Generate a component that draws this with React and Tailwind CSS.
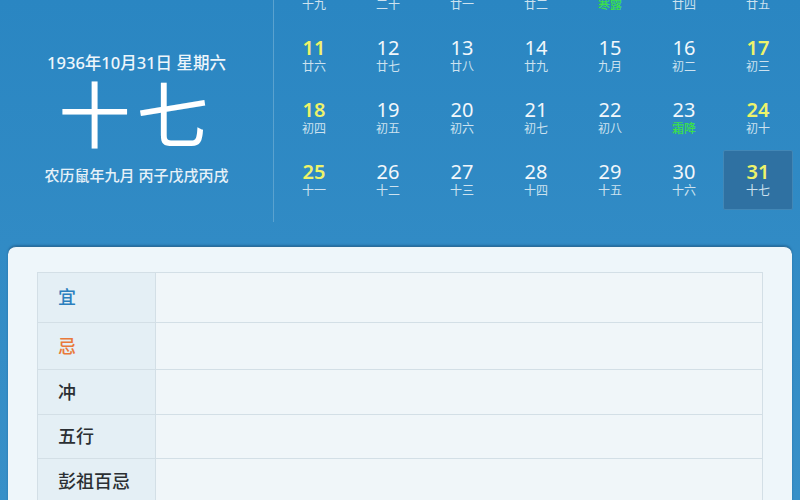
import React from "react";

const weeks = [
  [
    ["4", "十九"], ["5", "二十"], ["6", "廿一"], ["7", "廿二"],
    ["8", "寒露", "term"], ["9", "廿四"], ["10", "廿五"],
  ],
  [
    ["11", "廿六"], ["12", "廿七"], ["13", "廿八"], ["14", "廿九"],
    ["15", "九月"], ["16", "初二"], ["17", "初三"],
  ],
  [
    ["18", "初四"], ["19", "初五"], ["20", "初六"], ["21", "初七"],
    ["22", "初八"], ["23", "霜降", "term"], ["24", "初十"],
  ],
  [
    ["25", "十一"], ["26", "十二"], ["27", "十三"], ["28", "十四"],
    ["29", "十五"], ["30", "十六"], ["31", "十七", "today"],
  ],
];

const rows = [
  { label: "宜", color: "text-[#2b7fbe]", h: "h-[49px]" },
  { label: "忌", color: "text-[#e9793a]", h: "h-[47px]" },
  { label: "冲", color: "text-[#2b2f33]", h: "h-[45px]" },
  { label: "五行", color: "text-[#2b2f33]", h: "h-[44px]" },
  { label: "彭祖百忌", color: "text-[#2b2f33]", h: "h-[46px]" },
];

const DayCell = ({ day, lunar, kind, weekend }) => (
  <div className="relative h-[62px] flex flex-col items-center pt-[13px]">
    {kind === "today" && (
      <div className="absolute left-[2px] right-[2px] top-[1px] bottom-[1px] bg-[#2f71a2] border border-[#4287b6] rounded-[2px]" />
    )}
    <div
      className={`relative text-[20px] leading-[20px] ${
        weekend ? "text-[#eef36a] font-semibold" : "text-[#f2f7fb]"
      }`}
    >
      {day}
    </div>
    <div
      className={`relative mt-[2px] text-[12px] leading-[14px] ${
        kind === "term" ? "text-[#3be04a] font-medium" : "text-[#cde2ef]"
      }`}
    >
      {lunar}
    </div>
  </div>
);

export default function App() {
  return (
    <div
      className="w-[800px] h-[500px] overflow-hidden bg-gradient-to-b from-[#2a86c2] to-[#3890c8] flex flex-col"
      style={{ fontFamily: '"Noto Sans", "Noto Sans CJK SC", sans-serif' }}
    >
      <div className="flex h-[222px] shrink-0">
        <div className="w-[273px] flex flex-col items-center text-white">
          <div className="mt-[52px] text-[16.5px] leading-[22px] font-medium text-[#eef6fb]">
            1936年10月31日 星期六
          </div>
          <div className="mt-[2px] text-[72px] leading-[76px] tracking-[6px]">
            十七
          </div>
          <div className="mt-[13px] text-[15px] leading-[20px] font-medium text-[#e6f1f8]">
            农历鼠年九月 丙子戊戌丙戌
          </div>
        </div>
        <div className="w-[1px] bg-[#5aa2cf]" />
        <div className="flex-1 overflow-hidden pl-[3px] pr-[5px]">
          <div className="-mt-[37px] grid grid-cols-7">
            {weeks.map((week) =>
              week.map(([day, lunar, kind], i) => (
                <DayCell
                  key={day}
                  day={day}
                  lunar={lunar}
                  kind={kind}
                  weekend={i === 0 || i === 6}
                />
              ))
            )}
          </div>
        </div>
      </div>

      <div className="mt-[24px] mx-[8px] flex-1 bg-[#eef6fa] rounded-t-[8px] border-t border-[#2a6d9b] shadow-[0_-1px_2px_rgba(0,40,80,0.3)] px-[29px] pt-[25px]">
        <div className="border border-[#d3dfe6] border-b-0">
          {rows.map((r, i) => (
            <div
              key={r.label}
              className={`flex ${r.h} ${i > 0 ? "border-t border-[#d3dfe6]" : ""}`}
            >
              <div
                className={`w-[118px] shrink-0 bg-[#e4eff5] border-r border-[#d3dfe6] flex items-center pl-[20px] text-[18px] font-medium ${r.color}`}
              >
                {r.label}
              </div>
              <div className="flex-1 bg-[#f0f6f9]" />
            </div>
          ))}
        </div>
      </div>
    </div>
  );
}
